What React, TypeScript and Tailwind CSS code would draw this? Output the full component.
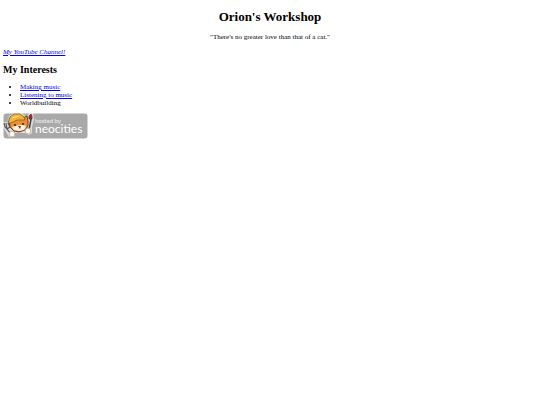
import React from 'react';

//things I like to do (href is only there when there is a page for it)
const interests = [
  { name: 'Making music', href: '#making' },
  { name: 'Listening to music', href: '#listening' },
  { name: 'Worldbuilding', href: '' },
];

//neocities badge with Penelope the cat
function NeocitiesBadge() {
  return (
    <svg width="85" height="26" viewBox="0 0 85 26" role="img" aria-label="Hosted by Neocities">
      <rect x="0.5" y="0.5" width="84" height="25" rx="3" fill="#a9a9a9" />
      {/* white outline around the cat */}
      <path d="M5 8 L6 3 L12 0 L18 0 L24 4 L26 0 L30 0 L31 6 L29 14 L29 20 L26 22 L22 20 L17 20 L12 20 L11 24 L6 24 L0 14 L0 9 L4 9 Z" fill="#fff" opacity="0.6" />
      {/* fork */}
      <path d="M1 10 L2 14 L4 16 L7 14 L5 10 M3 10 L4 16 L8 21" stroke="#5d5a5a" strokeWidth="1.2" fill="none" />
      {/* head with the right ear */}
      <path d="M6 8 L8 5 L20 5 L24 3 L25 8 L25 13 L22 17 L16 19 L11 18 L7 14 Z" fill="#ea8f35" stroke="#4f3324" strokeWidth="0.9" />
      <path d="M9 14 L13 13 L16 12 L20 12 L23 13 L21 17 L16 18 L11 17 Z" fill="#fff0dc" />
      {/* hat */}
      <path d="M5 10 L7 4 L11 1 L17 1 L21 4 L22 7 L14 7 L8 10 Z" fill="#f0b63c" stroke="#8a5b20" strokeWidth="0.8" />
      <path d="M9 5 L16 3" stroke="#ffe17c" strokeWidth="1" />
      <circle cx="12" cy="12" r="1" fill="#3a2418" />
      <circle cx="20" cy="11" r="1" fill="#3a2418" />
      <path d="M15 13 L18 13 L17 16 Z" fill="#713d2b" />
      {/* brush */}
      <path d="M28 6 L26 17" stroke="#4f3838" strokeWidth="1.5" />
      <path d="M26 6 L26 3 L28 1 L29 3 L29 6 Z" fill="#b02e38" stroke="#4a2220" strokeWidth="0.7" />
      {/* paws */}
      <circle cx="9" cy="21" r="2.8" fill="#fff" stroke="#c9a27c" strokeWidth="0.7" />
      <circle cx="25" cy="18" r="2.8" fill="#fff" stroke="#c9a27c" strokeWidth="0.7" />
      <text x="32" y="10" fontSize="6" fill="#f4f4f4" fontFamily="Lato, sans-serif">hosted by</text>
      <text x="32" y="20" fontSize="12" fill="#fff" fontFamily="Lato, sans-serif">neocities</text>
    </svg>
  );
}

function App() {
  return (
    <main className="px-[3px] pt-2 bg-white text-black font-['Liberation_Serif',serif] text-[7px] leading-[8px]">
      <h1 className="text-center text-[13px] leading-[17px] font-bold">Orion's Workshop</h1>
      <p className="mt-2 text-center">"There's no greater love than that of a cat."</p>
      <p className="mt-[7px]">
        <a href="#youtube" className="italic underline text-[#0000ee]">My YouTube Channel!</a>
      </p>

      <h2 className="mt-2 text-[10px] leading-[12px] font-bold">My Interests</h2>
      <ul className="mt-[7px] pl-[17px] list-disc">
        {interests.map((interest, index) => (
          <li key={index}>
            {interest.href ? (
              <a href={interest.href} className="underline text-[#0000ee]">{interest.name}</a>
            ) : (
              interest.name
            )}
          </li>
        ))}
      </ul>

      <a href="#neocities" className="inline-block mt-[6px]">
        <NeocitiesBadge />
      </a>
    </main>
  );
}

export default App;
